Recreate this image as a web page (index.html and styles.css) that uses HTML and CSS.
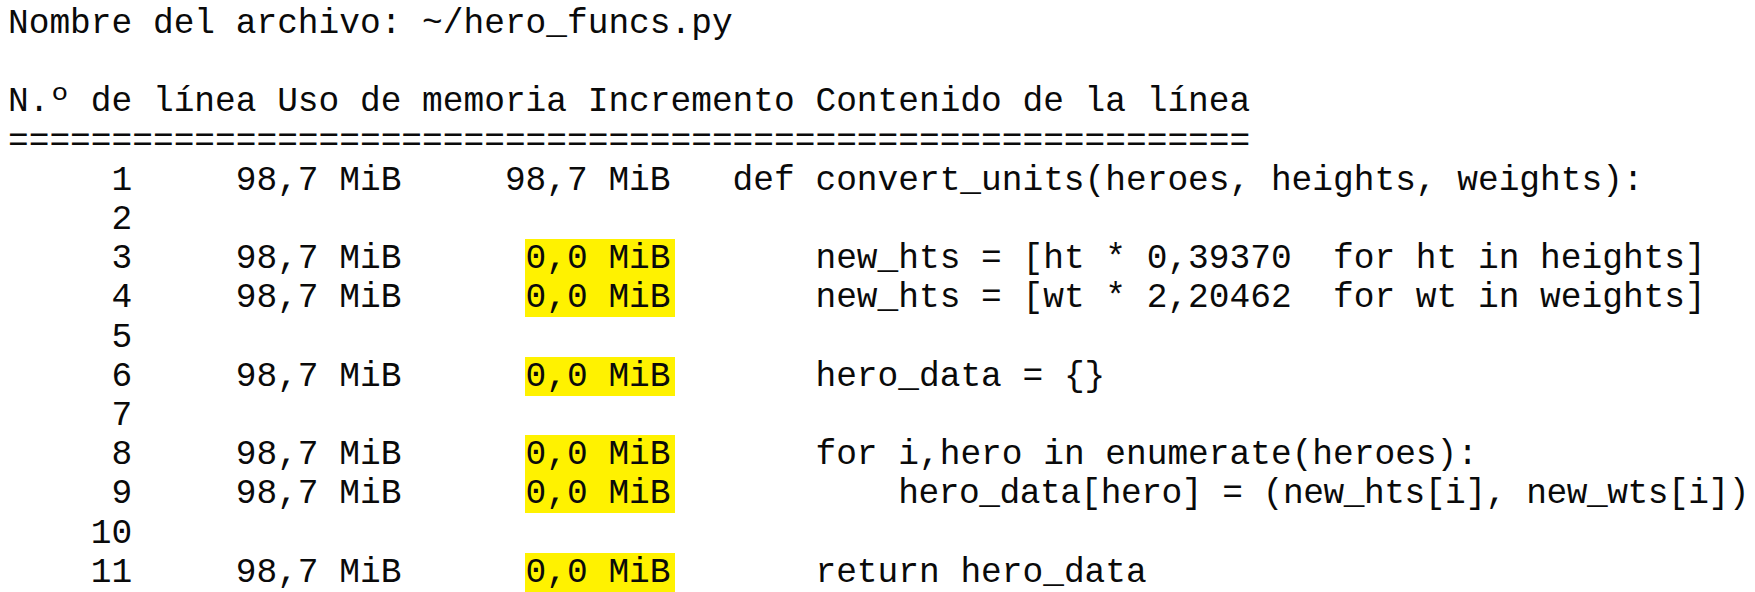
FILE: index.html
```html
<!DOCTYPE html>
<html lang="es">
<head>
<meta charset="utf-8">
<title>hero_funcs.py</title>
<link rel="stylesheet" href="styles.css">
</head>
<body>
<pre class="report">Nombre del archivo: ~/hero_funcs.py

N.º de línea Uso de memoria Incremento Contenido de la línea
============================================================
     1     98,7 MiB     98,7 MiB   def convert_units(heroes, heights, weights):
     2
     3     98,7 MiB      <span class="hl">0,0 MiB</span>       new_hts = [ht * 0,39370  for ht in heights]
     4     98,7 MiB      <span class="hl">0,0 MiB</span>       new_hts = [wt * 2,20462  for wt in weights]
     5
     6     98,7 MiB      <span class="hl">0,0 MiB</span>       hero_data = {}
     7
     8     98,7 MiB      <span class="hl">0,0 MiB</span>       for i,hero in enumerate(heroes):
     9     98,7 MiB      <span class="hl">0,0 MiB</span>           <span class="tight">hero_data[hero] = (new_hts[i], new_wts[i])</span>
    10
    11     98,7 MiB      <span class="hl">0,0 MiB</span>       return hero_data</pre>
</body>
</html>
```

FILE: styles.css
```css
html {
  overflow: hidden;
  background: #ffffff;
}

body {
  margin: 4px 8px 0 8px;
  background: #ffffff;
}

.report {
  margin: 0;
  font-family: "Liberation Mono", "DejaVu Sans Mono", monospace;
  font-size: 34.5px;
  line-height: 39.2px;
  color: #0a0a0a;
  white-space: pre;
}

.hl {
  background: #fff200;
  padding: 0 4px 0 1px;
  margin: 0 -4px 0 -1px;
}

.tight {
  letter-spacing: -0.45px;
}
```
